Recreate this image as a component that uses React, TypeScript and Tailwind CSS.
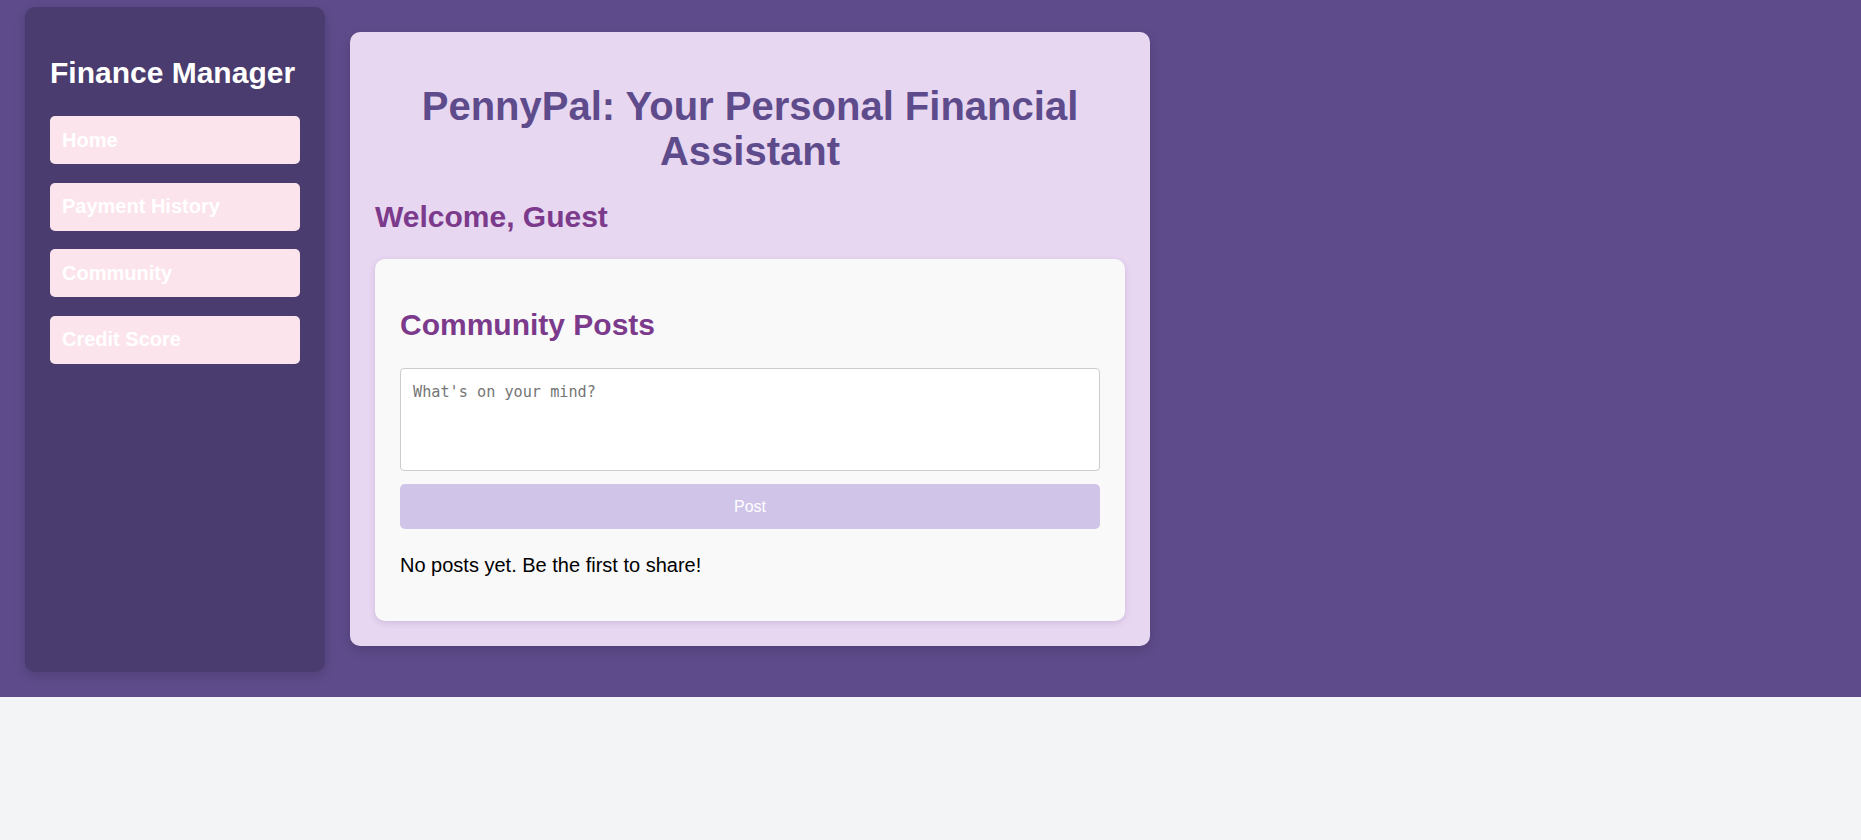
import React from "react";

const navItems = ["Home", "Payment History", "Community", "Credit Score"];

export default function App() {
  return (
    <div className="min-h-screen bg-[#f3f4f6]" style={{ fontFamily: '"Liberation Sans", Arial, sans-serif' }}>
      <div className="flex h-[697px] items-start gap-[25px] bg-[#5e4b8b] pl-[25px]">
        <aside className="mt-[7px] flex h-[665px] w-[300px] flex-col rounded-[10px] bg-[#4a3c6e] px-[25px] pt-[25px] shadow-[0_4px_12px_rgba(0,0,0,0.15)]">
          <h2 className="mt-[24px] mb-[26px] text-[30px] font-bold leading-[34px] text-white">Finance Manager</h2>
          <nav className="flex flex-col gap-[18.67px]">
            {navItems.map((item) => (
              <a
                key={item}
                href="#"
                className="flex h-[48px] items-center rounded-[5px] bg-[#fce4ec] pl-3 text-[20px] font-bold leading-[23px] text-white"
              >
                {item}
              </a>
            ))}
          </nav>
        </aside>

        <main className="mt-[32px] w-[800px] rounded-[10px] bg-[#e8d7f1] p-[25px] shadow-[0_4px_12px_rgba(0,0,0,0.15)]">
          <h1 className="mt-[27px] text-center text-[40px] font-bold leading-[45px] text-[#5e4b8b]">
            PennyPal: Your Personal Financial Assistant
          </h1>
          <h2 className="mt-[26px] mb-[25px] text-[30px] font-bold leading-[34px] text-[#7b3a8b]">Welcome, Guest</h2>

          <section className="rounded-[10px] bg-[#f9f9f9] p-[25px] shadow-[0_2px_6px_rgba(94,75,139,0.2)]">
            <h2 className="mt-[24px] mb-[26px] text-[30px] font-bold leading-[34px] text-[#7b3a8b]">Community Posts</h2>
            <textarea
              placeholder="What's on your mind?"
              className="block h-[103px] w-full resize-none rounded-[4px] border border-[#cccccc] bg-white px-3 pt-[14px] pb-[10px] text-[15.2px] leading-[18px] outline-none placeholder:text-[#757575]"
              style={{ fontFamily: '"DejaVu Sans Mono", "Liberation Mono", monospace' }}
            />
            <button className="mt-[13px] block h-[45px] w-full rounded-[5px] bg-[#d1c4e9] text-[16px] text-white">
              Post
            </button>
            <p className="mt-[25px] mb-[19px] text-[20px] leading-[23px] text-black">No posts yet. Be the first to share!</p>
          </section>
        </main>
      </div>
    </div>
  );
}
